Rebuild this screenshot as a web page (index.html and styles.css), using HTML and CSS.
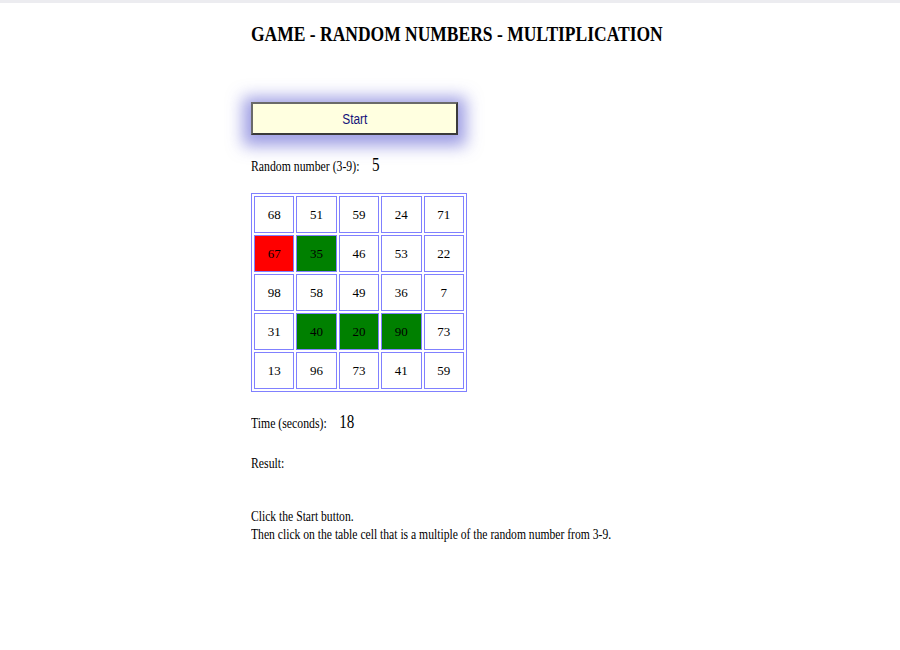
FILE: index.html
```html
<!DOCTYPE html>
<html>
<head>
<meta charset="utf-8">
<link rel="stylesheet" href="styles.css">
</head>
<body>
<div class="topbar"></div>
<main class="page">
  <h1 class="title">GAME - RANDOM NUMBERS - MULTIPLICATION</h1>
  <button class="start"><span class="start-label">Start</span></button>
  <div class="line rand"><span>Random number (3-9):</span><span class="big">5</span></div>
  <table class="grid">
    <tr><td>68</td><td>51</td><td>59</td><td>24</td><td>71</td></tr>
    <tr><td class="red">67</td><td class="green">35</td><td>46</td><td>53</td><td>22</td></tr>
    <tr><td>98</td><td>58</td><td>49</td><td>36</td><td>7</td></tr>
    <tr><td>31</td><td class="green">40</td><td class="green">20</td><td class="green">90</td><td>73</td></tr>
    <tr><td>13</td><td>96</td><td>73</td><td>41</td><td>59</td></tr>
  </table>
  <div class="line time"><span>Time (seconds):</span><span class="big">18</span></div>
  <div class="line result">Result:</div>
  <p class="help">Click the Start button.<br>Then click on the table cell that is a multiple of the random number from 3-9.</p>
</main>
</body>
</html>
```
FILE: styles.css
```css
html, body {
  margin: 0;
  padding: 0;
  background: #ffffff;
}
body {
  font-family: "Liberation Serif", "Times New Roman", serif;
  color: #000;
}
.topbar {
  height: 3px;
  background: #ececf0;
}
.page {
  padding-left: 251px;
  display: flex;
  flex-direction: column;
  align-items: flex-start;
}
.title {
  margin: 19px 0 0 0;
  font-size: 20px;
  font-weight: bold;
  line-height: 24px;
  white-space: nowrap;
  transform: scaleX(0.875);
  transform-origin: left center;
}
.start {
  margin-top: 56px;
  width: 207px;
  height: 33px;
  background: #ffffe0;
  border: 2px solid #3a3a3a;
  border-top-color: #6a6a6a;
  border-left-color: #6a6a6a;
  box-shadow: 0 3px 16px 8px rgba(80, 80, 205, 0.55);
  font-family: "Liberation Sans", Arial, sans-serif;
  font-size: 14px;
  color: #14147a;
  padding: 0;
}
.start-label {
  display: inline-block;
  transform: scaleX(0.85);
}
.line {
  font-size: 14px;
  display: flex;
  align-items: baseline;
  gap: 15px;
  white-space: nowrap;
  transform: scaleX(0.84);
  transform-origin: left center;
}
.big {
  font-size: 18px;
}
.rand {
  margin-top: 20px;
}
.grid {
  margin-top: 17px;
  border: 1px solid #8080ff;
  border-spacing: 2px;
}
.grid td {
  width: 38.4px;
  height: 35px;
  padding: 0;
  border: 1px solid #8080ff;
  text-align: center;
  font-size: 13px;
  color: #000;
  background: #fff;
}
.grid td.red { background: #ff0000; }
.grid td.green { background: #008000; }
.time {
  margin-top: 20px;
}
.result {
  margin-top: 23px;
}
.help {
  margin: 36px 0 0 0;
  font-size: 14px;
  line-height: 18px;
  white-space: nowrap;
  transform: scaleX(0.83);
  transform-origin: left top;
}
```
